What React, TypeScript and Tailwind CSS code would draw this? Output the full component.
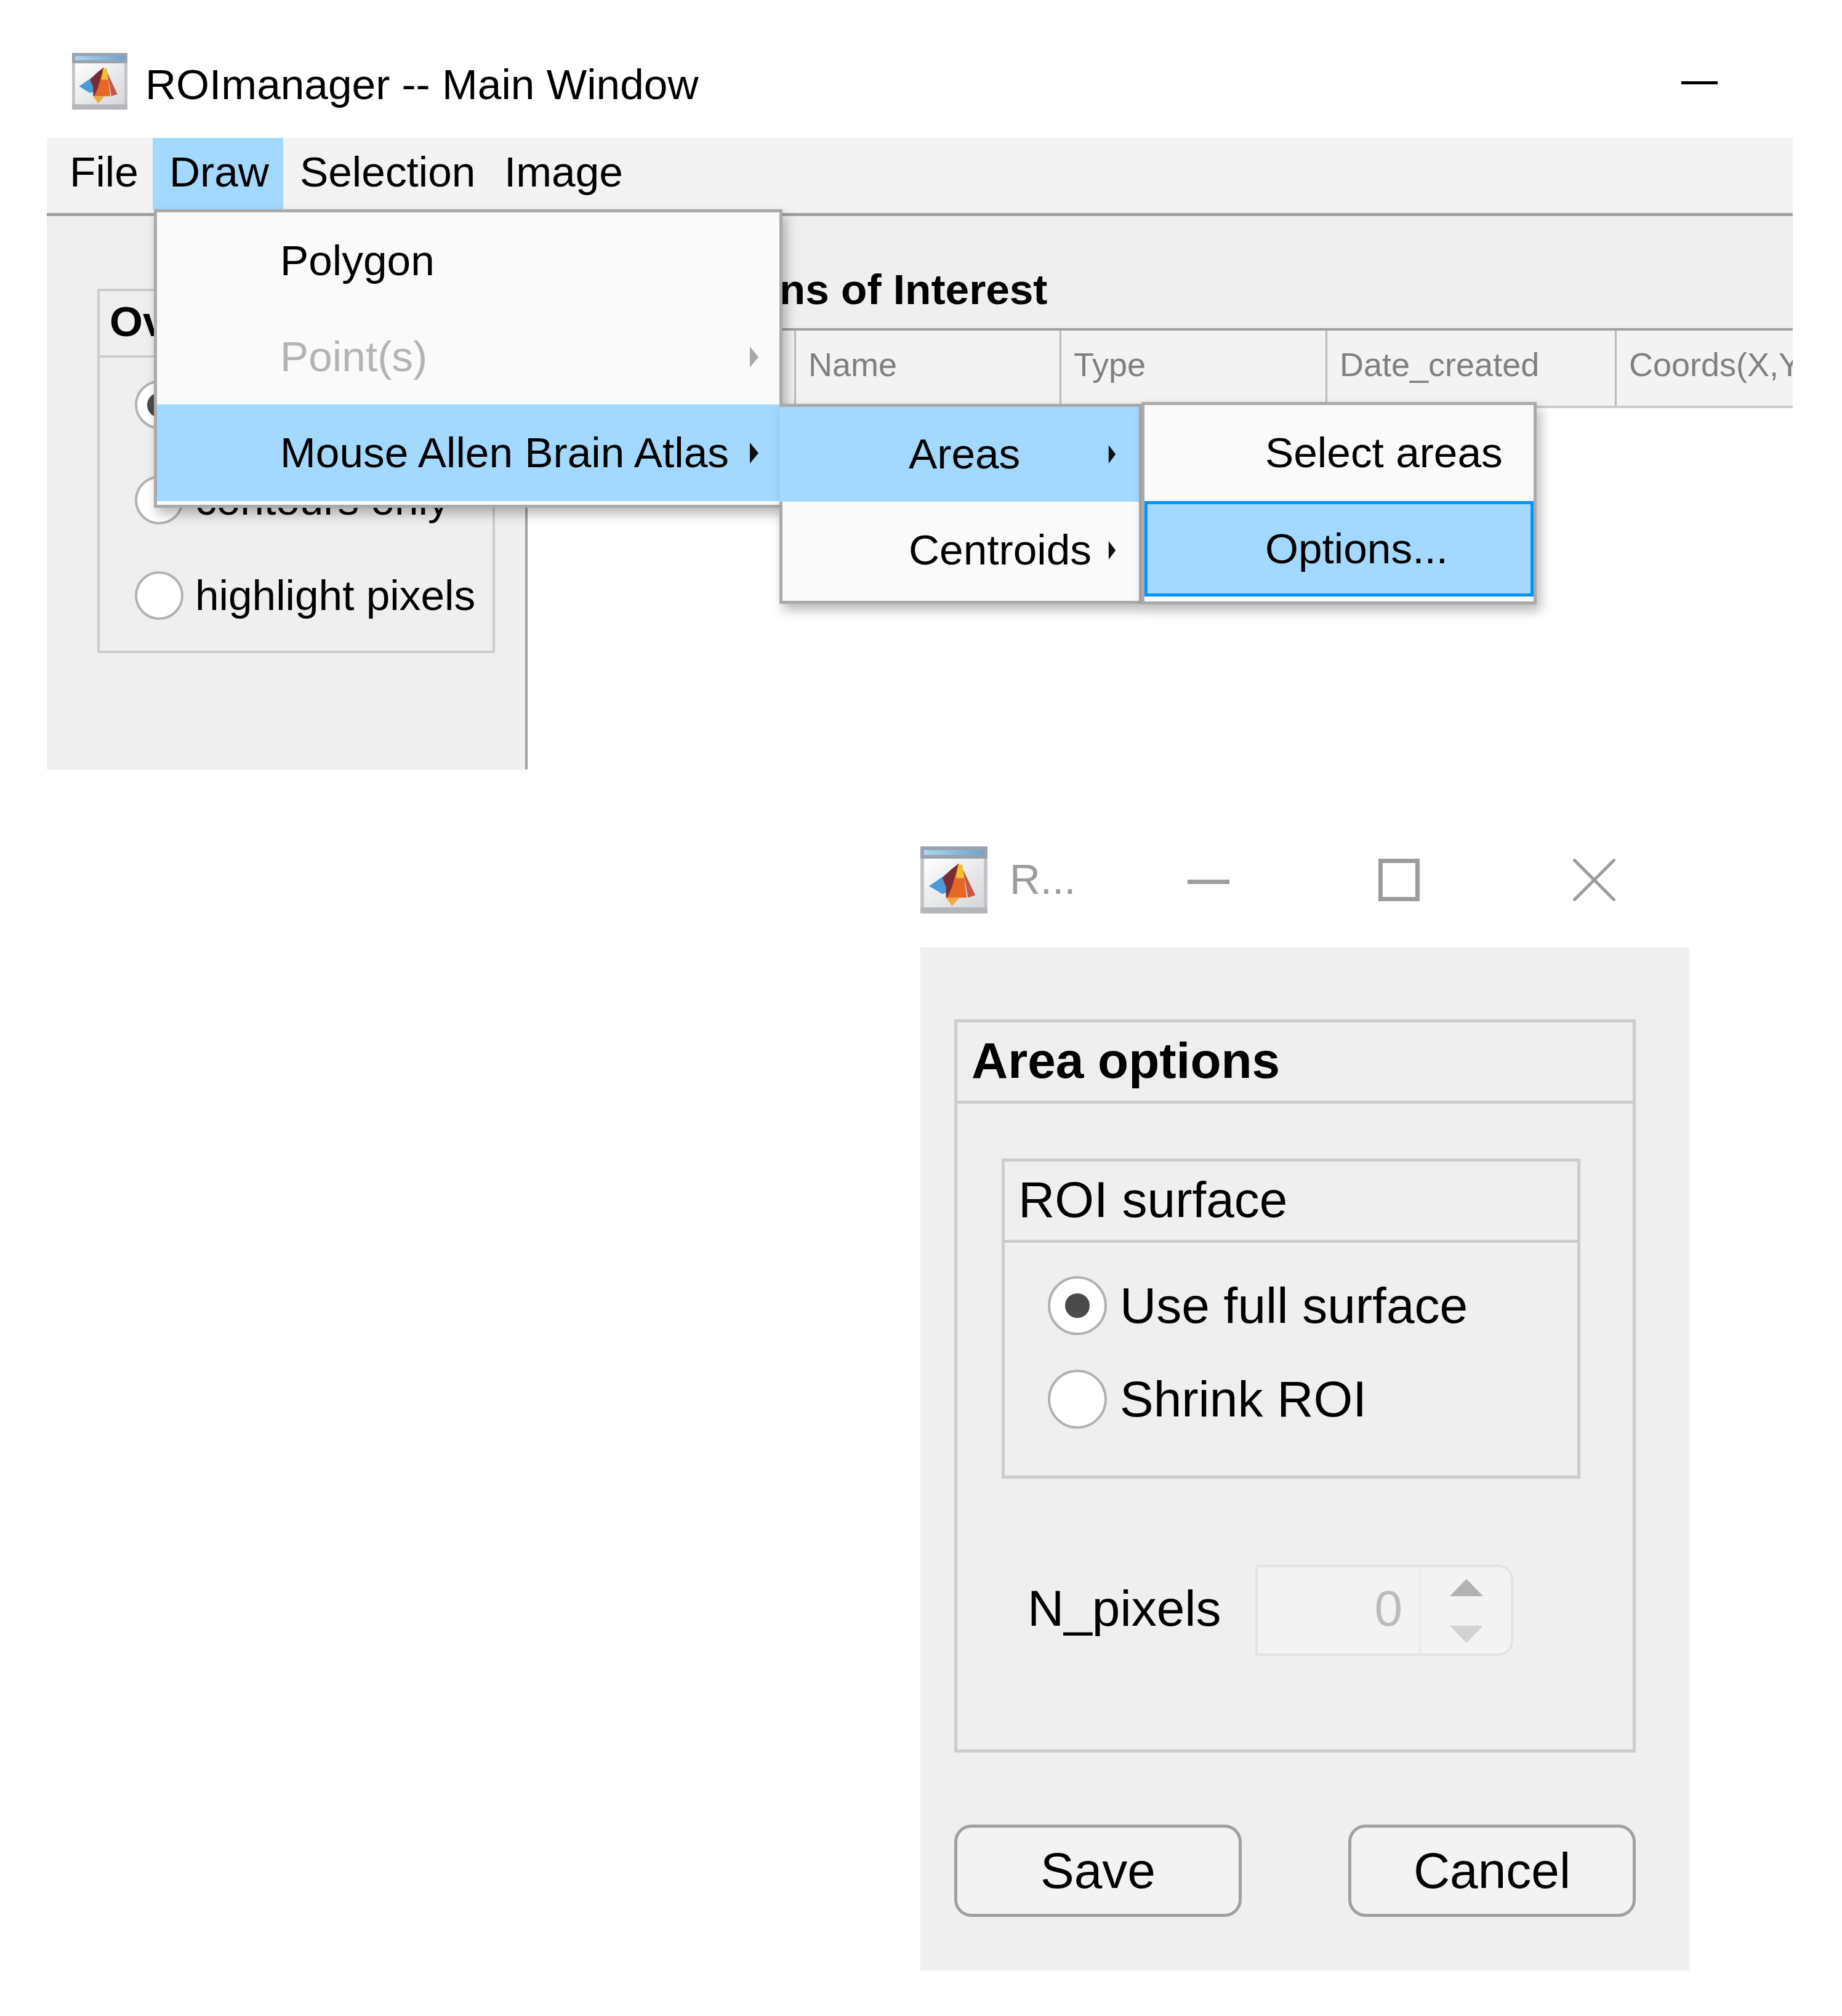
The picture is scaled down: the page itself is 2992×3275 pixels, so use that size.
const MatlabIcon = ({ className }: { className: string }) => (
  <svg viewBox="0 0 110 110" preserveAspectRatio="none" className={className}>
    <defs>
      <linearGradient id="winbg" x1="0" y1="0" x2="1" y2="1">
        <stop offset="0" stopColor="#ffffff" />
        <stop offset="1" stopColor="#d4d6d8" />
      </linearGradient>
      <linearGradient id="winbar" x1="0" y1="0" x2="1" y2="0">
        <stop offset="0" stopColor="#acd6f0" />
        <stop offset="1" stopColor="#6ba3d2" />
      </linearGradient>
    </defs>
    <rect width="110" height="110" fill="#c2c4c7" />
    <rect x="6" y="20" width="98" height="80" fill="url(#winbg)" />
    <rect width="110" height="20" fill="#99a2ad" />
    <rect x="6" y="6" width="98" height="8" fill="url(#winbar)" />
    <rect y="100" width="110" height="10" fill="#b4b6b9" />
    <polygon points="14,65 36,50 48,40 48,74 36,78 26,72" fill="#4a9bd8" />
    <polygon points="69,36 90,80 78,84 74,60" fill="#c9544a" />
    <polygon points="36,52 50,38 63,28 58,58 52,84 42,84 42,66" fill="#7c2b35" />
    <polygon points="63,28 72,50 76,84 44,84 52,66" fill="#e5672a" />
    <polygon points="62,30 69,30 72,52 58,52" fill="#f0c12f" />
    <polygon points="42,84 64,84 52,98" fill="#f2a93c" />
  </svg>
)

const Radio = ({ big, checked }: { big?: boolean; checked?: boolean }) => (
  <span
    className={`flex shrink-0 items-center justify-center rounded-full border-[4px] border-[#b2b2b2] bg-white ${
      big ? "h-[96px] w-[96px]" : "h-[79px] w-[79px]"
    }`}
  >
    {checked && <span className="h-[40px] w-[40px] rounded-full bg-[#4a4a4a]" />}
  </span>
)

const Arrow = ({ color, className }: { color: string; className: string }) => (
  <svg viewBox="0 0 16 34" preserveAspectRatio="none" className={className}>
    <polygon points="1,0 15,17 1,34" fill={color} />
  </svg>
)

const columns = [
  { name: "", width: "w-[436px]" },
  { name: "Name", width: "w-[431px]" },
  { name: "Type", width: "w-[432px]" },
  { name: "Date_created", width: "w-[470px]" },
]

export default function App() {
  return (
    <div className="h-[3275px] w-[2992px] overflow-hidden bg-white font-['Liberation_Sans',sans-serif] text-[69.4px] leading-none text-black">
      {/* main window */}
      <div className="relative ml-[76px] w-[2836px]">
        <div className="flex h-[224px] items-start pl-[41px] pt-[86px]">
          <MatlabIcon className="h-[92px] w-[90px]" />
          <span className="ml-[29px] mt-[17px]">ROImanager -- Main Window</span>
          <span className="ml-auto mr-[122px] mt-[46px] h-[5px] w-[59px] bg-black" />
        </div>

        <div className="flex h-[127px] items-start border-b-[5px] border-[#a0a0a0] bg-[#f3f3f3]">
          <div className="h-[116px] w-[172px] pl-[37px] pt-[21px]">File</div>
          <div className="h-[116px] w-[212px] bg-[#a3d9ff] pl-[27px] pt-[21px]">Draw</div>
          <div className="h-[116px] w-[334px] pl-[27px] pt-[21px]">Selection</div>
          <div className="h-[116px] pl-[25px] pt-[21px]">Image</div>
        </div>

        <div className="flex h-[899px]">
          <div className="w-[781px] border-r-4 border-[#a0a0a0] bg-[#efefef] pl-[82px] pt-[118px]">
            <div className="h-[592px] w-[646px] border-4 border-[#cccccc]">
              <div className="h-[108px] border-b-4 border-[#cccccc] pl-[16px] pt-[15px] font-bold">Overlay</div>
              <div className="flex flex-col gap-[76px] pl-[57px] pt-[37px]">
                <Radio checked />
                <div className="flex items-center gap-[19px]">
                  <Radio />
                  <span>contours only</span>
                </div>
                <div className="flex items-center gap-[19px]">
                  <Radio />
                  <span>highlight pixels</span>
                </div>
              </div>
            </div>
          </div>

          <div className="min-w-0 flex-1">
            <div className="h-[182px] bg-[#efefef] pl-[216px] pt-[85px] font-bold">Regions of Interest</div>
            <div className="flex h-[130px] overflow-hidden border-y-4 border-b-[#cccccc] border-t-[#a0a0a0] bg-[#f3f3f3] text-[54px] text-[#808080]">
              {columns.map((col) => (
                <div key={col.name} className={`${col.width} shrink-0 border-r-[3px] border-[#bbbbbb] pl-[20px] pt-[28px]`}>
                  {col.name}
                </div>
              ))}
              <div className="whitespace-nowrap pl-[20px] pt-[28px]">Coords(X,Y)</div>
            </div>
          </div>
        </div>

        {/* open menus */}
        <div className="absolute left-[174px] top-[340px] w-[1021px] border-[5px] border-[#aaaaaa] bg-[#fafafa] pb-[6px] shadow-[6px_10px_18px_rgba(0,0,0,0.28)]">
          <div className="flex h-[157px] items-center pl-[200px]">Polygon</div>
          <div className="flex h-[155px] items-center justify-between pl-[200px] pr-[33px] text-[#b4b4b4]">
            <span>Point(s)</span>
            <Arrow color="#a8a8a8" className="h-[34px] w-[16px]" />
          </div>
          <div className="flex h-[157px] items-center justify-between bg-[#a3d9ff] pl-[200px] pr-[33px]">
            <span>Mouse Allen Brain Atlas</span>
            <Arrow color="#111111" className="h-[34px] w-[16px]" />
          </div>

          <div className="absolute left-[1011px] top-[308px] flex items-start">
            <div className="mt-[3px] h-[325px] w-[588px] border-[5px] border-r-4 border-[#aaaaaa] bg-[#fafafa] shadow-[6px_10px_18px_rgba(0,0,0,0.28)]">
              <div className="-ml-[5px] flex h-[154px] items-center justify-between bg-[#a3d9ff] pl-[210px] pr-[37px]">
                <span>Areas</span>
                <Arrow color="#111111" className="h-[30px] w-[13px]" />
              </div>
              <div className="flex h-[157px] items-center justify-between pl-[205px] pr-[37px]">
                <span>Centroids</span>
                <Arrow color="#111111" className="h-[30px] w-[13px]" />
              </div>
            </div>
            <div className="h-[329px] w-[642px] border-[5px] border-[#aaaaaa] bg-[#fafafa] shadow-[6px_10px_18px_rgba(0,0,0,0.28)]">
              <div className="flex h-[156px] items-center pl-[196px]">Select areas</div>
              <div className="flex h-[155px] items-center border-[5px] border-[#0095ff] bg-[#a3d9ff] pl-[191px]">Options...</div>
            </div>
          </div>
        </div>
      </div>

      {/* area options dialog */}
      <div className="ml-[1495px] mt-[125px] w-[1249px] text-[82px]">
        <div className="flex h-[164px] items-start">
          <MatlabIcon className="h-[109px] w-[109px]" />
          <span className="ml-[36px] mt-[19px] text-[69px] text-[#9c9c9c]">R...</span>
          <span className="ml-[182px] mt-[54px] h-[7px] w-[68px] bg-[#9c9c9c]" />
          <span className="ml-[242px] mt-[20px] h-[69px] w-[67px] border-[7px] border-[#9c9c9c] bg-white" />
          <svg viewBox="0 0 69 69" preserveAspectRatio="none" className="ml-[249px] mt-[20px] h-[69px] w-[69px]">
            <path d="M1 1L68 68M68 1L1 68" stroke="#9c9c9c" strokeWidth="5" fill="none" />
          </svg>
        </div>

        <div className="h-[1662px] bg-[#efefef] pl-[55px] pt-[117px]">
          <div className="h-[1191px] w-[1107px] border-[5px] border-[#cccccc]">
            <div className="h-[132px] border-b-[5px] border-[#cccccc] pl-[23px] pt-[21px] font-bold">Area options</div>
            <div className="pl-[72px] pt-[89px]">
              <div className="h-[520px] w-[940px] border-[5px] border-[#cccccc]">
                <div className="h-[132px] border-b-[5px] border-[#cccccc] pl-[22px] pt-[21px]">ROI surface</div>
                <div className="flex flex-col gap-[56px] pl-[70px] pt-[54px]">
                  <div className="flex items-center gap-[21px]">
                    <Radio big checked />
                    <span>Use full surface</span>
                  </div>
                  <div className="flex items-center gap-[21px]">
                    <Radio big />
                    <span>Shrink ROI</span>
                  </div>
                </div>
              </div>
            </div>

            <div className="flex items-center pl-[114px] pt-[140px]">
              <span className="w-[370px] pb-[6px]">N_pixels</span>
              <div className="flex h-[148px] w-[419px] rounded-r-[24px] border-4 border-[#e3e3e3] bg-[#f3f3f3]">
                <div className="flex w-[266px] items-center justify-end border-r-4 border-[#ebebeb] pb-[6px] pr-[27px] text-[#bcbcbc]">0</div>
                <div className="flex flex-1 flex-col items-center gap-[48px] pt-[19px]">
                  <svg viewBox="0 0 54 28" className="h-[28px] w-[54px]">
                    <polygon points="27,0 54,28 0,28" fill="#b2b2b2" />
                  </svg>
                  <svg viewBox="0 0 54 28" className="h-[28px] w-[54px]">
                    <polygon points="0,0 54,0 27,28" fill="#d2d2d2" />
                  </svg>
                </div>
              </div>
            </div>
          </div>

          <div className="mt-[117px] flex w-[1107px] justify-between">
            <button className="h-[150px] w-[467px] rounded-[28px] border-[5px] border-[#a0a0a0] bg-[#f3f3f3]">Save</button>
            <button className="h-[150px] w-[467px] rounded-[28px] border-[5px] border-[#a0a0a0] bg-[#f3f3f3]">Cancel</button>
          </div>
        </div>
      </div>
    </div>
  )
}
